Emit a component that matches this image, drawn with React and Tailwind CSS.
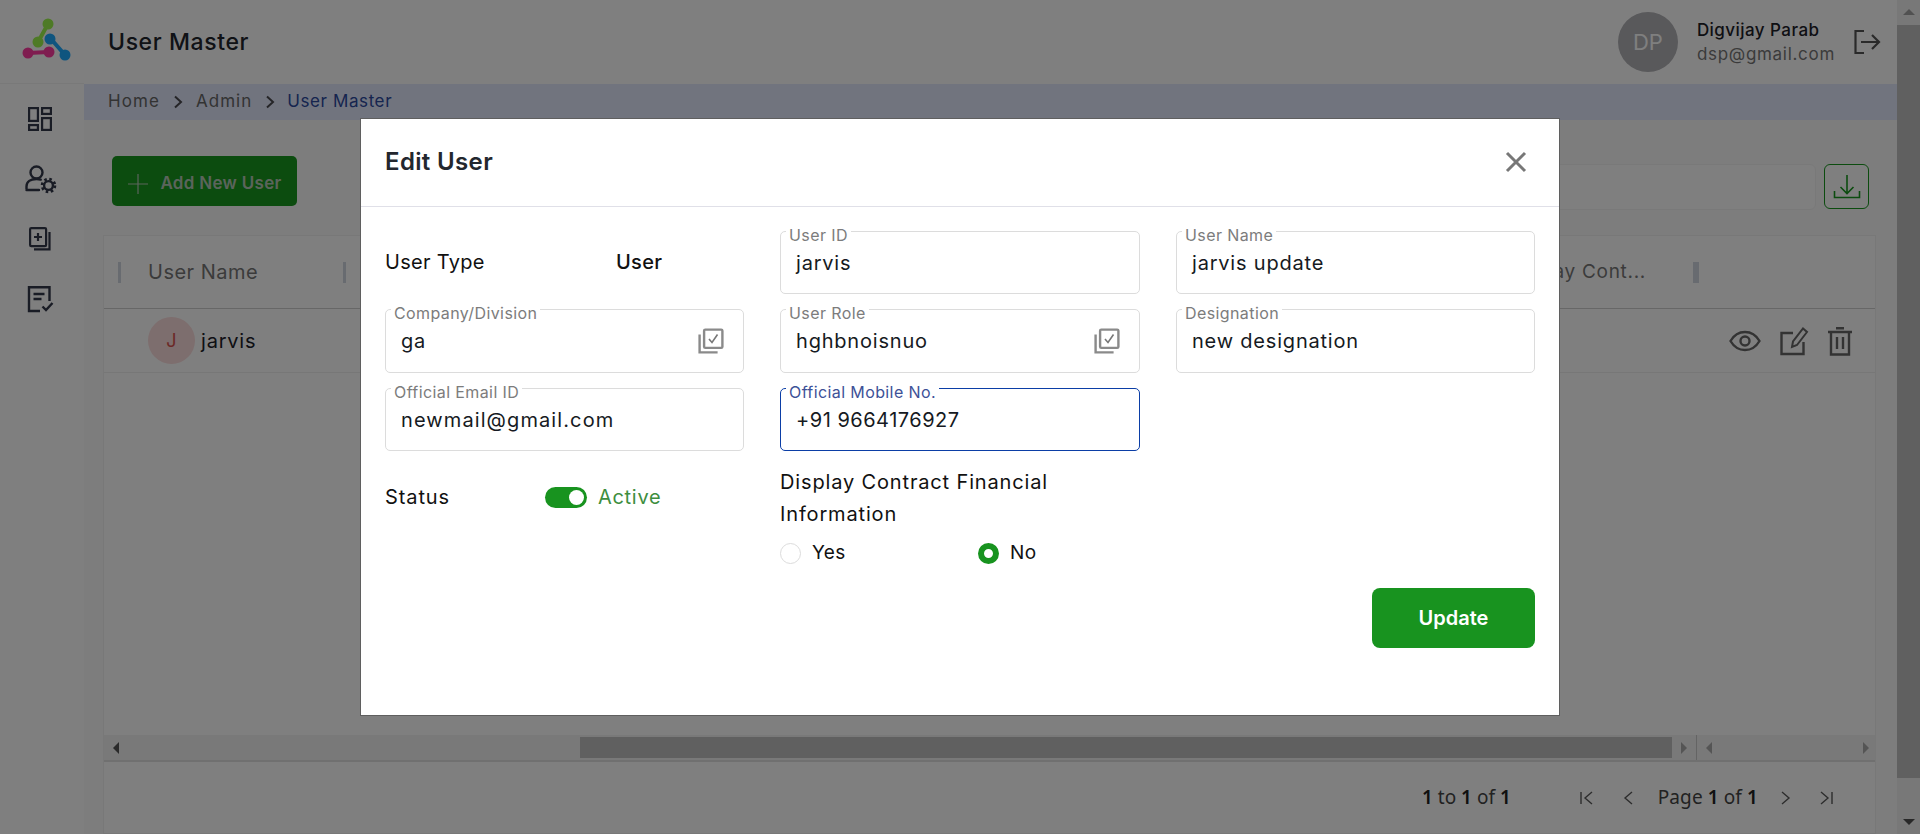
import React from "react";

const D = "#33384a";

function Logo() {
  return (
    <svg width="60" height="56" viewBox="0 0 60 56" className="block">
      <g strokeLinecap="round">
        <path d="M29 10 L19 28" stroke="#9cf54c" strokeWidth="4" />
        <circle cx="29" cy="10" r="5.5" fill="#9cf54c" />
        <circle cx="19" cy="28" r="5.5" fill="#9cf54c" />
        <path d="M32 25 L46 41" stroke="#1faaff" strokeWidth="4" />
        <circle cx="31" cy="25" r="5.5" fill="#1faaff" />
        <circle cx="46" cy="41" r="5.5" fill="#1faaff" />
        <path d="M9 39 L30 38" stroke="#ff3aa0" strokeWidth="4" />
        <circle cx="9" cy="39" r="5.5" fill="#ff3aa0" />
        <circle cx="30" cy="38" r="5.5" fill="#ff3aa0" />
      </g>
    </svg>
  );
}

function IconDash() {
  return (
    <svg width="24" height="24" viewBox="0 0 24 24" fill="none" stroke={D} strokeWidth="2.2">
      <rect x="1.1" y="1.1" width="8.8" height="12.8" />
      <rect x="14.1" y="1.1" width="8.8" height="5.8" />
      <rect x="1.1" y="18.1" width="8.8" height="4.8" />
      <rect x="14.1" y="11.1" width="8.8" height="11.8" />
    </svg>
  );
}

function IconUserGear() {
  return (
    <svg width="32" height="30" viewBox="0 0 32 30" fill="none" stroke={D} strokeWidth="2.4">
      <circle cx="11.5" cy="7.5" r="6" />
      <path d="M1.5 24v-2.5c0-4.5 4-7.5 10-7.5 1.6 0 3 .2 4.2.6M1.5 25h12.5" strokeLinecap="round" />
      <circle cx="23.5" cy="20.5" r="4.4" strokeWidth="2.4" />
      <circle cx="23.5" cy="20.5" r="6.4" strokeWidth="2.8" strokeDasharray="2.5 2.53" />
    </svg>
  );
}

function IconDocPlus() {
  return (
    <svg width="22" height="24" viewBox="0 0 22 24" fill="none" stroke={D} strokeWidth="2.2">
      <rect x="1.1" y="1.1" width="16" height="18" rx="1.2" />
      <path d="M20.5 5v17.4H5" />
      <path d="M9 6v8M5 10h8" />
    </svg>
  );
}

function IconNoteCheck() {
  return (
    <svg width="27" height="27" viewBox="0 0 27 27" fill="none" stroke={D} strokeWidth="2.4">
      <path d="M13 25H2V1.2h20.5V15" />
      <path d="M6.5 8h11M6.5 13h8" />
      <path d="M15.5 20.5l3.5 3.5 6.5-7" strokeWidth="2.4" />
    </svg>
  );
}

function IconPick() {
  return (
    <svg width="26" height="26" viewBox="0 0 26 26" fill="none" stroke="#8a8a8a" strokeWidth="2.4">
      <rect x="6.1" y="1.6" width="18.3" height="18.3" rx="1.2" />
      <path d="M1.6 6.5v17.9h18" />
      <path d="M11 11l3 3.5 5.5-8" strokeWidth="1.6" stroke="#777" />
    </svg>
  );
}

function Field({ label, value, icon, active, textClass = "tracking-[0.8px]" }) {
  return (
    <div
      className={
        "relative flex items-center justify-between rounded-[5px] border pl-[15px] pr-[19px] " +
        (active ? "border-[#0b3ea6]" : "border-[#dcdcdc]")
      }
    >
      <span
        className={
          "absolute left-[5px] top-[-6px] bg-white px-[3px] text-[16px] leading-[18px] tracking-[0.4px] " +
          (active ? "text-[#3d5197]" : "text-[#7c7c7c]")
        }
      >
        {label}
      </span>
      <span className={"text-[20px] text-[#161a22] " + textClass}>{value}</span>
      {icon && <IconPick />}
    </div>
  );
}

function Chev({ className = "" }) {
  return (
    <svg width="12" height="14" viewBox="0 0 12 14" fill="none" stroke="#4a4a4f" strokeWidth="2" className={className}>
      <path d="M3 1.5L9 7l-6 5.5" />
    </svg>
  );
}

function PageIcon({ d }) {
  return (
    <svg width="16" height="18" viewBox="0 0 16 18" fill="none" stroke="#5a5a5a" strokeWidth="1.4">
      <path d={d} />
    </svg>
  );
}

function HeadBar() {
  return <span className="h-[21px] w-[3px] bg-[#d0d6e0]" />;
}

export default function App() {
  return (
    <div
      className="relative flex h-[834px] w-[1920px] overflow-hidden bg-white text-[#111]"
      style={{ fontFamily: "Inter, 'Noto Sans', sans-serif" }}
    >
      {/* sidebar */}
      <aside className="flex w-[84px] shrink-0 flex-col items-stretch bg-white">
        <div className="flex h-[84px] items-center justify-center border-b border-[#f2f2f2] pl-[13px]">
          <Logo />
        </div>
        <nav className="flex flex-col">
          <div className="flex h-[62px] items-center justify-center pt-[8px] pr-[4px]"><IconDash /></div>
          <div className="flex h-[60px] items-center justify-center pr-[3px] pt-[7px]"><IconUserGear /></div>
          <div className="flex h-[60px] items-center justify-center pr-[4px] pt-[6px]"><IconDocPlus /></div>
          <div className="flex h-[60px] items-center justify-center pr-[3px] pt-[6px]"><IconNoteCheck /></div>
        </nav>
      </aside>

      {/* main */}
      <div className="flex min-w-0 flex-1 flex-col bg-[#fbfbfb]">
        <header className="flex h-[84px] shrink-0 items-center justify-between bg-white pl-[24px] pr-[16px]">
          <h1 className="text-[23px] font-medium tracking-[0.6px] text-[#20242c]">User Master</h1>
          <div className="flex items-center">
            <div className="flex h-[60px] w-[60px] items-center justify-center rounded-full bg-[#b2b2b6] text-[22px] text-white">DP</div>
            <div className="ml-[19px] flex flex-col">
              <span className="text-[17px] leading-[24px] font-medium tracking-[0.45px] text-[#1c2028]">Digvijay Parab</span>
              <span className="text-[17px] leading-[24px] tracking-[0.7px] text-[#777]">dsp@gmail.com</span>
            </div>
            <svg width="28" height="26" viewBox="0 0 28 26" fill="none" stroke="#555" strokeWidth="2.2" className="ml-[18px]">
              <path d="M11 2H2.5v22H11" />
              <path d="M8 13h18M19 6l7 7-7 7" />
            </svg>
          </div>
        </header>
        <div className="flex h-[36px] shrink-0 items-center gap-[11px] bg-[#e3e8fd] pb-[1px] pl-[24px] text-[17px] tracking-[0.6px]">
          <span className="tracking-[1.1px] text-[#666]">Home</span>
          <Chev className="ml-[1px]" />
          <span className="ml-[1px] tracking-[1px] text-[#666]">Admin</span>
          <Chev className="ml-[1px]" />
          <span className="text-[#2c4a9f]">User Master</span>
        </div>

        <div className="flex min-h-0 flex-1 flex-col pl-[19px] pr-[21px]">
          <div className="flex h-[115px] shrink-0 items-start justify-between pt-[36px] pl-[9px] pr-[7px]">
            <button className="flex h-[50px] w-[185px] items-center justify-center gap-[11px] rounded-[5px] bg-[#18981f] pt-[5px] text-[17px] font-semibold tracking-[0.3px] text-[#b7c9b8]">
              <svg width="22" height="22" viewBox="0 0 22 22" stroke="#b7c9b8" strokeWidth="1.2"><path d="M11 1v20M1 11h20" /></svg>
              Add New User
            </button>
            <div className="flex items-start gap-[8px] pt-[8px]">
              <div className="h-[46px] w-[500px] rounded-[6px] border border-[#f3f3f3] bg-white" />
              <button className="flex h-[45px] w-[45px] items-center justify-center rounded-[6px] border border-[#18981f] bg-white">
                <svg width="28" height="26" viewBox="0 0 28 26" fill="none" stroke="#18981f" strokeWidth="1.6">
                  <path d="M14 1v18M7.5 13l6.5 6.5 6.5-6.5M1.5 17v6.5h25V17" />
                </svg>
              </button>
            </div>
          </div>

          <div className="flex min-h-0 flex-1 flex-col border border-[#f0f0f0] bg-white">
            <div className="flex h-[73px] shrink-0 items-center border-b border-[#cfcfcf] pl-[14px]">
              <HeadBar />
              <span className="ml-[27px] w-[195px] text-[20px] tracking-[0.5px] text-[#777]">User Name</span>
              <HeadBar />
              <span className="ml-auto text-[19px] tracking-[0.7px] text-[#777]">Display Cont...</span>
              <span className="ml-[47px] mr-[176px] h-[21px] w-[6px] bg-[#d0d6e0]" />
            </div>
            <div className="flex h-[64px] shrink-0 items-center border-b border-[#eeeeee] pl-[44px] pr-[22px]">
              <div className="flex h-[47px] w-[47px] items-center justify-center rounded-full bg-[#fbdcdc] text-[18px] text-[#d9534f]">J</div>
              <span className="ml-[6px] text-[20px] tracking-[0.8px] text-[#1c2028]">jarvis</span>
              <div className="ml-auto flex items-center gap-[18px]">
                <svg width="32" height="22" viewBox="0 0 32 22" fill="none" stroke="#666" strokeWidth="2.4">
                  <path d="M1.5 11C5 5 10 2 16 2s11 3 14.5 9C27 17 22 20 16 20S5 17 1.5 11z" />
                  <circle cx="16" cy="11" r="4.5" />
                </svg>
                <svg width="30" height="30" viewBox="0 0 30 30" fill="none" stroke="#666" strokeWidth="2.4">
                  <path d="M14 7H2.5v21h22V16" />
                  <path d="M13 21l1-5.5L24 2.5l4 3.5L18 19z" strokeWidth="2" />
                </svg>
                <svg width="26" height="30" viewBox="0 0 26 30" fill="none" stroke="#666" strokeWidth="2.4">
                  <path d="M1 6h24M9 2.2h8M4 6v22.5h18V6M10 11v12M16 11v12" />
                </svg>
              </div>
            </div>
            <div className="flex-1" />
            <div className="flex h-[27px] shrink-0 items-center border-b-2 border-[#e0e0e0] bg-[#f2f2f2]">
              <div className="flex h-[25px] flex-1 items-center">
                <span className="ml-[9px] h-0 w-0 border-y-[6px] border-r-[6px] border-y-transparent border-r-[#555]" />
                <span className="ml-[461px] h-[21px] w-[1092px] bg-[#c0c0c0]" />
                <span className="ml-[9px] h-0 w-0 border-y-[6px] border-l-[6px] border-y-transparent border-l-[#aaa]" />
                <span className="ml-[9px] h-full w-px bg-[#c8c8c8]" />
              </div>
              <div className="flex h-[25px] w-[179px] items-center justify-between pl-[9px] pr-[6px]">
                <span className="h-0 w-0 border-y-[6px] border-r-[6px] border-y-transparent border-r-[#aaa]" />
                <span className="h-0 w-0 border-y-[6px] border-l-[6px] border-y-transparent border-l-[#aaa]" />
              </div>
            </div>
            <div
              className="flex h-[71px] shrink-0 items-center justify-end pr-[41px] text-[19px] text-[#444]"
              style={{ fontFamily: "'Noto Sans', sans-serif" }}
            >
              <span><b className="font-semibold text-[#222]">1</b> to <b className="font-semibold text-[#222]">1</b> of <b className="font-semibold text-[#222]">1</b></span>
              <span className="ml-[68px]"><PageIcon d="M2 3v12M13 3L6 9l7 6" /></span>
              <span className="ml-[26px]"><PageIcon d="M11 3L4 9l7 6" /></span>
              <span className="ml-[21px] tracking-[0.1px]">Page <b className="font-semibold text-[#222]">1</b> of <b className="font-semibold text-[#222]">1</b></span>
              <span className="ml-[19px]"><PageIcon d="M5 3l7 6-7 6" /></span>
              <span className="ml-[25px]"><PageIcon d="M3 3l7 6-7 6M14 3v12" /></span>
            </div>
          </div>
        </div>
      </div>

      {/* window scrollbar */}
      <div className="flex w-[23px] shrink-0 flex-col items-center justify-between bg-[#f1f1f1] pt-[9px] pb-[9px]">
        <span className="h-0 w-0 border-x-[6px] border-b-[6px] border-x-transparent border-b-[#a3a3a3]" />
        <span className="mt-[10px] w-full flex-1 bg-[#c1c1c1]" />
        <span className="mt-[41px] h-0 w-0 border-x-[6px] border-t-[6px] border-x-transparent border-t-[#505050]" />
      </div>

      {/* dialog */}
      <div className="absolute inset-0 flex items-start justify-center bg-black/50 pt-[118px]">
        <div className="h-[598px] w-[1200px] border border-[#5f5f5f] bg-white">
          <div className="flex h-[88px] items-center justify-between border-b border-[#e0e0e8] pb-[2px] pl-[24px] pr-[32px]">
            <h2 className="text-[24px] font-semibold tracking-[0.35px] text-[#23272e]">Edit User</h2>
            <svg width="22" height="22" viewBox="0 0 22 22" stroke="#777" strokeWidth="3">
              <path d="M2 2l18 18M20 2L2 20" />
            </svg>
          </div>
          <div className="px-[24px] pt-[24px]">
            <div className="grid grid-cols-[359px_360px_359px] grid-rows-[63px_64px_63px] gap-x-[36px] gap-y-[15px]">
              <div className="flex items-center pb-[1px] text-[20px] tracking-[0.3px]">
                <span className="w-[231px]">User Type</span>
                <span className="font-medium">User</span>
              </div>
              <Field label="User ID" value="jarvis" />
              <Field label="User Name" value="jarvis update" />
              <Field label="Company/Division" value="ga" icon />
              <Field label="User Role" value="hghbnoisnuo" icon />
              <Field label="Designation" value="new designation" />
              <Field label="Official Email ID" value="newmail@gmail.com" textClass="tracking-[1.1px]" />
              <Field label="Official Mobile No." value="+91 9664176927" active textClass="tracking-[0.5px]" />
            </div>
            <div className="mt-[15px] grid grid-cols-[359px_360px_359px] gap-x-[36px]">
              <div className="flex items-center self-start pt-[16px] text-[20px]">
                <span className="w-[160px] tracking-[0.9px]">Status</span>
                <span className="flex h-[21px] w-[42px] items-center justify-end rounded-full bg-[#18931f] pr-[3px]">
                  <span className="h-[15px] w-[15px] rounded-full bg-white" />
                </span>
                <span className="ml-[11px] tracking-[0.7px] text-[#3e8e3e]">Active</span>
              </div>
              <div>
                <div className="text-[20px] leading-[32px] tracking-[0.85px]">Display Contract Financial<br />Information</div>
                <div className="mt-[9px] flex items-center text-[19px] tracking-[0.4px]">
                  <span className="h-[21px] w-[21px] rounded-full border border-[#dcdcdc]" />
                  <span className="ml-[11px] w-[166px]">Yes</span>
                  <span className="h-[21px] w-[21px] rounded-full border-[6px] border-[#18931f]" />
                  <span className="ml-[11px]">No</span>
                </div>
              </div>
            </div>
            <div className="mt-[20px] flex justify-end">
              <button className="h-[60px] w-[163px] rounded-[8px] bg-[#18931f] text-[20px] font-semibold text-white">Update</button>
            </div>
          </div>
        </div>
      </div>
    </div>
  );
}
